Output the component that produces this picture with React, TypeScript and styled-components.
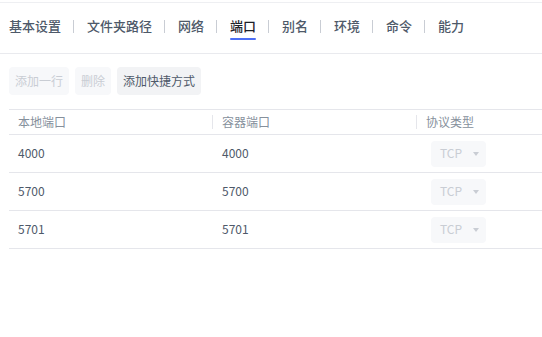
import * as React from "react";
import styled, { createGlobalStyle } from "styled-components";

const GlobalStyle = createGlobalStyle`
  html, body {
    margin: 0;
    padding: 0;
    background: #fff;
  }
  body {
    font-family: "Noto Sans CJK SC", "Noto Sans", sans-serif;
    color: #4e5969;
  }
`;

const Page = styled.div`
  padding-top: 2px;
`;

const TabBar = styled.div`
  display: flex;
  align-items: center;
  box-sizing: border-box;
  height: 52px;
  padding: 0 0 4px 9px;
  border-top: 1px solid #eeeff2;
  border-bottom: 1px solid #e9eaee;
`;

const Tab = styled.div<{ $active?: boolean }>`
  position: relative;
  font-size: 13px;
  line-height: 20px;
  font-weight: 500;
  color: ${(p) => (p.$active ? "#1d2129" : "#4e5969")};
  white-space: nowrap;

  &::after {
    content: "";
    display: ${(p) => (p.$active ? "block" : "none")};
    position: absolute;
    left: 0;
    right: 0;
    bottom: -4px;
    height: 2px;
    border-radius: 1px;
    background: #4c6ef5;
  }
`;

const Divider = styled.span`
  display: block;
  width: 1px;
  height: 13px;
  margin: 0 13px 0 12px;
  background: #c9cdd4;
`;

const Toolbar = styled.div`
  display: flex;
  gap: 6px;
  padding: 13px 0 0 9px;
`;

const Button = styled.button<{ $disabled?: boolean }>`
  height: 28px;
  padding: 0 6px 1px;
  border: none;
  border-radius: 4px;
  font-family: inherit;
  font-size: 12px;
  background: ${(p) => (p.$disabled ? "#f7f8fa" : "#f2f3f5")};
  color: ${(p) => (p.$disabled ? "#c9cdd4" : "#4e5969")};
  cursor: ${(p) => (p.$disabled ? "not-allowed" : "pointer")};
`;

const Table = styled.div`
  margin: 14px 0 0 9px;
  border-top: 1px solid #e5e6eb;
`;

const HeadRow = styled.div`
  display: grid;
  grid-template-columns: 204px 204px 1fr;
  height: 24px;
  border-bottom: 1px solid #e5e6eb;
`;

const HeadCell = styled.div<{ $divider?: boolean }>`
  position: relative;
  display: flex;
  align-items: center;
  padding: 0 0 2px 9px;
  font-size: 12px;
  color: #86909c;

  &::before {
    content: "";
    display: ${(p) => (p.$divider ? "block" : "none")};
    position: absolute;
    left: -1px;
    top: 5px;
    width: 1px;
    height: 14px;
    background: #e5e6eb;
  }
`;

const Row = styled.div`
  display: grid;
  grid-template-columns: 204px 204px 1fr;
  height: 37px;
  border-bottom: 1px solid #e5e6eb;
`;

const Cell = styled.div`
  display: flex;
  align-items: center;
  padding: 0 0 3px 9px;
  font-size: 12px;
  color: #4e5969;
`;

const Select = styled.div`
  display: flex;
  align-items: center;
  width: 55px;
  height: 26px;
  margin: 3px 0 0 5px;
  padding: 0 0 2px 9px;
  box-sizing: border-box;
  border-radius: 4px;
  background: #f7f8fa;
  color: #c9cdd4;
  font-size: 12px;
`;

const Caret = styled.span`
  margin: 2px 0 0 11px;
  width: 0;
  height: 0;
  border-left: 3px solid transparent;
  border-right: 3px solid transparent;
  border-top: 4px solid #c9cdd4;
`;

const tabs = ["基本设置", "文件夹路径", "网络", "端口", "别名", "环境", "命令", "能力"];

const ports = [
  { local: "4000", container: "4000", protocol: "TCP" },
  { local: "5700", container: "5700", protocol: "TCP" },
  { local: "5701", container: "5701", protocol: "TCP" },
];

export default function App() {
  return (
    <Page>
      <GlobalStyle />
      <TabBar>
        {tabs.map((t, i) => (
          <React.Fragment key={t}>
            {i > 0 && <Divider />}
            <Tab $active={t === "端口"}>{t}</Tab>
          </React.Fragment>
        ))}
      </TabBar>
      <Toolbar>
        <Button $disabled>添加一行</Button>
        <Button $disabled>删除</Button>
        <Button>添加快捷方式</Button>
      </Toolbar>
      <Table>
        <HeadRow>
          <HeadCell>本地端口</HeadCell>
          <HeadCell $divider>容器端口</HeadCell>
          <HeadCell $divider>协议类型</HeadCell>
        </HeadRow>
        {ports.map((p) => (
          <Row key={p.local}>
            <Cell>{p.local}</Cell>
            <Cell>{p.container}</Cell>
            <Cell>
              <Select>
                {p.protocol}
                <Caret />
              </Select>
            </Cell>
          </Row>
        ))}
      </Table>
    </Page>
  );
}
